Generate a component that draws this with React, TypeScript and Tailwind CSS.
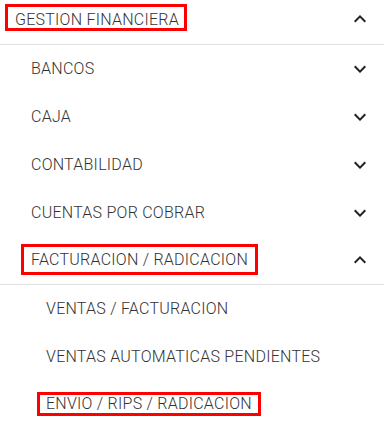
import React from "react";

const Down = () => (
  <svg width="24" height="24" viewBox="0 0 24 24" className="shrink-0 fill-[#212121]">
    <path d="M16.59 8.59L12 13.17 7.41 8.59 6 10l6 6 6-6z" />
  </svg>
);
const Up = () => (
  <svg width="24" height="24" viewBox="0 0 24 24" className="shrink-0 fill-[#212121]">
    <path d="M12 8l-6 6 1.41 1.41L12 10.83l4.59 4.58L18 14z" />
  </svg>
);

const Row = ({ label }: { label: string }) => (
  <div className="flex h-12 items-center justify-between pl-[31px] pr-[12px]">
    <span className="leading-[18px]">{label}</span>
    <Down />
  </div>
);

const Sub = ({ label }: { label: string }) => (
  <div className="flex h-12 items-center pl-[46px]">
    <span className="leading-[18px]">{label}</span>
  </div>
);

export default function App() {
  return (
    <div
      className="w-[384px] h-[423px] overflow-hidden bg-white text-[16px] font-light tracking-[0.25px] text-[#333333]"
      style={{ fontFamily: "Roboto, 'Liberation Sans', sans-serif" }}
    >
      <div className="flex h-[45px] items-start justify-between border-b border-[#e0e0e0] pl-[5px] pr-[12px]">
        <span className="mt-[4px] border-[3px] border-[#ff0000] pl-[7px] pr-[5px] pt-[5px] leading-[16px]">
          GESTION FINANCIERA
        </span>
        <div className="mt-[7px]">
          <Up />
        </div>
      </div>
      <Row label="BANCOS" />
      <Row label="CAJA" />
      <Row label="CONTABILIDAD" />
      <Row label="CUENTAS POR COBRAR" />
      <div className="flex h-12 items-start justify-between border-b border-[#e0e0e0] pl-[21px] pr-[12px]">
        <span className="mt-[7px] border-[3px] border-[#ff0000] px-[7px] pt-[4px] pb-[3px] leading-[18px]">
          FACTURACION / RADICACION
        </span>
        <div className="mt-[11px]">
          <Up />
        </div>
      </div>
      <Sub label="VENTAS / FACTURACION" />
      <Sub label="VENTAS AUTOMATICAS PENDIENTES" />
      <div className="flex h-12 items-start pl-[37px]">
        <span className="mt-[11px] border-[3px] border-[#ff0000] px-[6px] leading-[18px]">
          ENVIO / RIPS / RADICACION
        </span>
      </div>
    </div>
  );
}
